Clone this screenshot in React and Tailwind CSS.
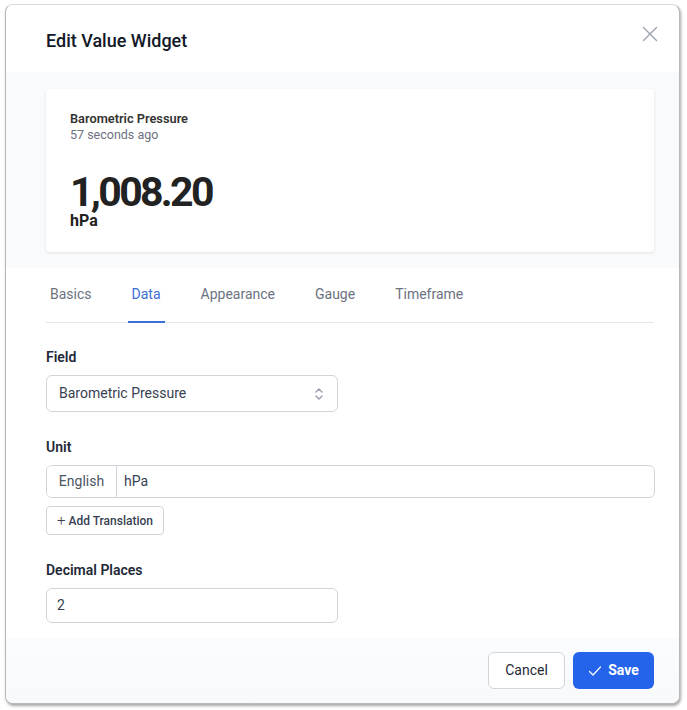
import React from 'react';

const tabs = ['Basics', 'Data', 'Appearance', 'Gauge', 'Timeframe'];

function CloseIcon() {
  return (
    <svg width="16" height="16" viewBox="0 0 16 16" fill="none" stroke="#9ca3af" strokeWidth="1.4" strokeLinecap="round">
      <path d="M1.5 1.5l13 13M14.5 1.5l-13 13" />
    </svg>
  );
}

function UpDownIcon() {
  return (
    <svg width="10" height="16" viewBox="0 0 10 16" fill="none" stroke="#9ca3af" strokeWidth="1.5" strokeLinecap="round" strokeLinejoin="round">
      <path d="M2 6l3-3 3 3M2 10l3 3 3-3" />
    </svg>
  );
}

function CheckIcon() {
  return (
    <svg width="14" height="14" viewBox="0 0 14 14" fill="none" stroke="white" strokeWidth="1.2" strokeLinecap="round" strokeLinejoin="round">
      <path d="M1.5 7.5l3.5 3.5 7.5-8" />
    </svg>
  );
}

export default function App() {
  return (
    <div className="w-[687px] h-[710px] bg-white pt-[4px] pl-[5px]" style={{ fontFamily: 'Roboto, "Liberation Sans", sans-serif' }}>
      <div className="w-[675px] h-[700px] bg-white rounded-lg border border-[#b8b8b8] border-t-[#dcdcdc] shadow-[1px_2px_3px_rgba(0,0,0,0.35)] flex flex-col overflow-hidden">
        {/* header */}
        <div className="h-[67px] shrink-0 flex justify-between pl-[40px] pr-[21px]">
          <h2 className="pt-[22px] text-[18px] leading-[28px] font-medium text-[#111827]">Edit Value Widget</h2>
          <button className="mt-[21px] h-[16px]">
            <CloseIcon />
          </button>
        </div>

        {/* preview */}
        <div className="shrink-0 bg-[#f9fafb] pl-[40px] pr-[25px] pt-[17px] pb-[16px]">
          <div className="h-[163px] bg-white rounded shadow-[0_1px_3px_rgba(0,0,0,0.1)] pl-[24px] pt-[22px]">
            <p className="text-[12.8px] leading-[16px] font-semibold text-[#333]">Barometric Pressure</p>
            <p className="text-[12.5px] leading-[16px] text-[#6b7280]">57 seconds ago</p>
            <p className="mt-[29px] text-[41px] leading-[40px] font-bold tracking-[-0.065em] text-[#222]">1,008.20</p>
            <p className="text-[16px] leading-[18px] font-bold text-[#222]">hPa</p>
          </div>
        </div>

        {/* form */}
        <div className="flex-1 pl-[40px] pr-[25px]">
          <div className="flex gap-8 border-b border-[#e5e7eb] pt-[16px]">
            {tabs.map((t) => (
              <div
                key={t}
                className={
                  t === 'Data'
                    ? 'px-1 pb-[17px] -mb-px border-b-2 border-[#3b6fd4] text-[14px] leading-[20px] text-[#3b6fd4]'
                    : 'px-1 pb-[17px] -mb-px border-b-2 border-transparent text-[14px] leading-[20px] text-[#6b7280]'
                }
              >
                {t}
              </div>
            ))}
          </div>

          <label className="block mt-[24px] text-[14px] leading-[20px] font-semibold text-[#1f2937]">Field</label>
          <div className="mt-[8px] w-[292px] h-[37px] border border-[#d1d5db] rounded-md flex items-center justify-between pl-[12px] pr-[13px]">
            <span className="text-[14px] text-[#374151]">Barometric Pressure</span>
            <UpDownIcon />
          </div>

          <label className="block mt-[25px] text-[14px] leading-[20px] font-semibold text-[#1f2937]">Unit</label>
          <div className="mt-[8px] w-[609px] h-[33px] border border-[#d1d5db] rounded-md flex overflow-hidden">
            <div className="w-[70px] shrink-0 bg-white border-r border-[#d1d5db] flex items-center justify-center text-[14px] text-[#4b5563]">
              English
            </div>
            <div className="flex items-center pl-[7px] text-[14px] text-[#374151]">hPa</div>
          </div>
          <button className="mt-[8px] h-[29px] px-[10px] border border-[#d1d5db] rounded flex items-center gap-[3px] text-[12px] font-medium text-[#374151] bg-white">
            <span className="text-[15px] leading-none font-light">+</span>
            Add Translation
          </button>

          <label className="block mt-[25px] text-[14px] leading-[20px] font-semibold text-[#1f2937]">Decimal Places</label>
          <div className="mt-[8px] w-[292px] h-[35px] border border-[#d1d5db] rounded-md flex items-center pl-[10px] text-[14px] text-[#374151]">
            2
          </div>
        </div>

        {/* footer */}
        <div className="h-[65px] shrink-0 bg-gradient-to-b from-[#fbfcfd] to-[#f8f9fb] flex justify-end items-start gap-2 pt-[14px] pr-[25px]">
          <button className="h-[37px] w-[77px] bg-white border border-[#d1d5db] rounded-md text-[14px] font-normal text-[#1f2937]">
            Cancel
          </button>
          <button className="h-[37px] w-[81px] bg-[#2563eb] rounded-md flex items-center justify-center gap-[6px] text-[14px] font-bold text-white">
            <CheckIcon />
            Save
          </button>
        </div>
      </div>
    </div>
  );
}
